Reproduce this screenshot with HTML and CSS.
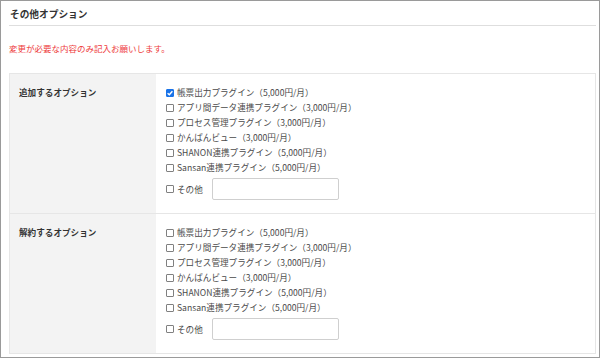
FILE: index.html
```html
<!DOCTYPE html>
<html lang="ja">
<head>
  <meta charset="UTF-8" />
  <title>その他オプション</title>
  <link rel="stylesheet" href="styles.css">
</head>
<body>
  <div class="frame">
    <h2 class="title">その他オプション</h2>
    <p class="note">変更が必要な内容のみ記入お願いします。</p>

    <div class="opt-table">
      <!-- 追加 -->
      <div class="opt-row">
        <div class="opt-label">追加するオプション</div>
        <div class="opt-body">
          <label class="item"><span class="box checked"><svg viewBox="0 0 8 8" width="8" height="8"><path d="M1.6 4.2 L3.3 5.8 L6.4 2.2" fill="none" stroke="#fff" stroke-width="1.4"/></svg></span>帳票出力プラグイン（5,000円/月）</label>
          <label class="item"><span class="box"></span>アプリ間データ連携プラグイン（3,000円/月）</label>
          <label class="item"><span class="box"></span>プロセス管理プラグイン（3,000円/月）</label>
          <label class="item"><span class="box"></span>かんばんビュー（3,000円/月）</label>
          <label class="item"><span class="box"></span>SHANON連携プラグイン（5,000円/月）</label>
          <label class="item"><span class="box"></span>Sansan連携プラグイン（5,000円/月）</label>
          <div class="other">
            <label class="item"><span class="box"></span>その他</label>
            <input type="text" class="other-input">
          </div>
        </div>
      </div>

      <!-- 解約 -->
      <div class="opt-row">
        <div class="opt-label">解約するオプション</div>
        <div class="opt-body">
          <label class="item"><span class="box"></span>帳票出力プラグイン（5,000円/月）</label>
          <label class="item"><span class="box"></span>アプリ間データ連携プラグイン（3,000円/月）</label>
          <label class="item"><span class="box"></span>プロセス管理プラグイン（3,000円/月）</label>
          <label class="item"><span class="box"></span>かんばんビュー（3,000円/月）</label>
          <label class="item"><span class="box"></span>SHANON連携プラグイン（5,000円/月）</label>
          <label class="item"><span class="box"></span>Sansan連携プラグイン（5,000円/月）</label>
          <div class="other">
            <label class="item"><span class="box"></span>その他</label>
            <input type="text" class="other-input">
          </div>
        </div>
      </div>
    </div>
  </div>
</body>
</html>
```

FILE: styles.css
```css
* {
  margin: 0;
  padding: 0;
  box-sizing: border-box;
}

body {
  font-family: "Noto Sans CJK JP", "Noto Sans", sans-serif;
  color: #4a4a4a;
  background: #fff;
}

.frame {
  width: 600px;
  height: 358px;
  border: 1px solid #9a9a9a;
  padding: 0 3px 0 8px;
  overflow: hidden;
}

.title {
  font-size: 9.7px;
  font-weight: bold;
  line-height: 14px;
  color: #333;
  padding: 6px 0 4px 1px;
  border-bottom: 1px solid #dedede;
}

.note {
  font-size: 8.5px;
  line-height: 14px;
  color: #ee3b3b;
  margin: 15px 0 18px;
}

.opt-table {
  border: 1px solid #e6e6e6;
}

.opt-row {
  display: grid;
  grid-template-columns: 146px 1fr;
}

.opt-row + .opt-row {
  border-top: 1px solid #e6e6e6;
}

.opt-label {
  background: #f3f3f3;
  font-size: 8.6px;
  font-weight: bold;
  color: #333;
  line-height: 15px;
  padding: 11px 9px;
}

.opt-body {
  padding: 11px 10px 13px;
  font-size: 8.6px;
  line-height: 15px;
}

.item {
  display: flex;
  align-items: center;
  height: 15px;
  white-space: nowrap;
}

.box {
  width: 8px;
  height: 8px;
  border: 1px solid #808080;
  border-radius: 1px;
  margin-right: 3px;
  background: #fff;
  display: flex;
  align-items: center;
  justify-content: center;
}

.box.checked {
  background: #1a73e8;
  border-color: #1a73e8;
}

.box svg {
  display: block;
  flex: none;
}

.other {
  display: flex;
  align-items: center;
  margin-top: 3px;
  gap: 9px;
}

.other-input {
  width: 127px;
  height: 22px;
  border: 1px solid #cfcfcf;
  border-radius: 2px;
  background: #fff;
}
```
